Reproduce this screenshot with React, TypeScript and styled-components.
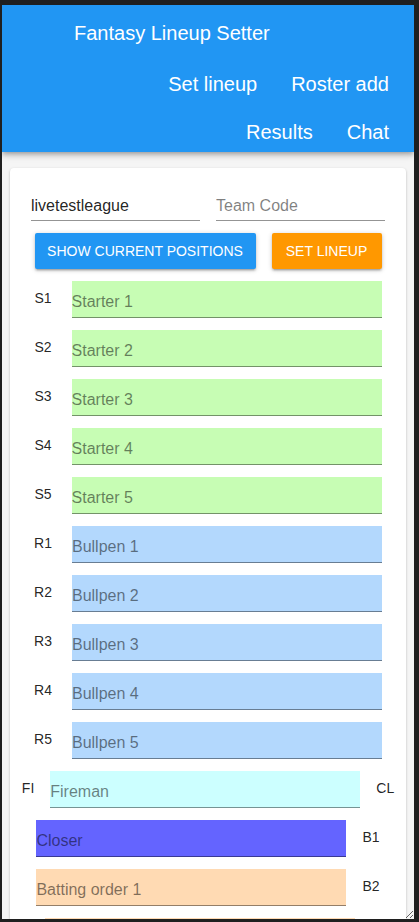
import React from "react";
import styled, { createGlobalStyle } from "styled-components";

const Global = createGlobalStyle`
  html, body { margin: 0; padding: 0; background: #1f1f1f; }
  body { font-family: "Liberation Sans", Arial, sans-serif; }
  * { box-sizing: border-box; }
`;

const Frame = styled.div`
  margin: 5px 5px 0 2px;
  height: 914px;
  background: #f5f5f5;
  overflow: hidden;
  resize: both;
  display: flex;
  flex-direction: column;
`;

const AppBar = styled.header`
  background: #2196f3;
  color: #fff;
  padding: 4px 25px 0 72px;
  height: 147px;
  flex-shrink: 0;
  box-shadow: 0 2px 4px -1px rgba(0,0,0,0.2), 0 4px 5px 0 rgba(0,0,0,0.14), 0 1px 10px 0 rgba(0,0,0,0.12);
  position: relative;
  z-index: 1;
`;

const Title = styled.div`
  height: 48px;
  line-height: 48px;
  font-size: 20px;
`;

const NavRow = styled.nav<{ $top: number }>`
  display: flex;
  justify-content: flex-end;
  gap: 34px;
  margin-top: ${(p) => p.$top}px;
  height: 40px;
  line-height: 40px;
  font-size: 20px;
`;

const NavItem = styled.span``;

const Card = styled.main`
  margin: 16px 8px 0 8px;
  background: #fff;
  border-radius: 4px;
  padding: 22px 21px 40px;
  box-shadow: 0 1px 3px 0 rgba(0,0,0,0.2), 0 1px 1px 0 rgba(0,0,0,0.14), 0 2px 1px -1px rgba(0,0,0,0.12);
  flex-shrink: 0;
`;

const FieldRow = styled.div`
  display: flex;
  gap: 16px;
`;

const TextField = styled.input`
  width: 169px;
  height: 31px;
  border: none;
  border-bottom: 1px solid rgba(0,0,0,0.42);
  padding: 1px 0 0;
  font-family: inherit;
  font-size: 16px;
  color: rgba(0,0,0,0.87);
  background: transparent;
  outline: none;
  &::placeholder { color: rgba(0,0,0,0.5); }
`;

const ButtonRow = styled.div`
  display: flex;
  justify-content: center;
  gap: 16px;
  margin-top: 12px;
`;

const Button = styled.button<{ $color: string; $width: number }>`
  width: ${(p) => p.$width}px;
  height: 36px;
  padding: 0;
  border: none;
  border-radius: 2px;
  background: ${(p) => p.$color};
  color: #fff;
  font-family: inherit;
  font-size: 14px;
  white-space: nowrap;
  flex-shrink: 0;
  text-transform: uppercase;
  box-shadow: 0 1px 5px 0 rgba(0,0,0,0.2), 0 2px 2px 0 rgba(0,0,0,0.14), 0 3px 1px -2px rgba(0,0,0,0.12);
`;

const Slots = styled.div`
  display: flex;
  flex-direction: column;
  gap: 12px;
  margin-top: 12px;
`;

const Line = styled.div<{ $gap: number }>`
  display: flex;
  justify-content: center;
  align-items: center;
  gap: ${(p) => p.$gap}px;
`;

const Label = styled.span`
  flex-shrink: 0;
  font-size: 14px;
  color: rgba(0,0,0,0.87);
  margin-top: -3px;
`;

const Slot = styled.input<{ $bg: string }>`
  flex-shrink: 0;
  width: 310px;
  height: 37px;
  border: none;
  border-bottom: 1px solid rgba(0,0,0,0.42);
  background: ${(p) => p.$bg};
  padding: 6px 0 0;
  font-family: inherit;
  font-size: 16px;
  color: rgba(0,0,0,0.87);
  outline: none;
  &::placeholder { color: rgba(0,0,0,0.5); }
`;

const GREEN = "#c7fdb4";
const BLUE = "#b3d8fd";
const CYAN = "#ccffff";
const CLOSER = "#6464ff";
const PEACH = "#ffdab3";

export default function App() {
  const starters = [1, 2, 3, 4, 5];
  const batting = [1, 2];
  return (
    <>
      <Global />
      <Frame>
        <AppBar>
          <Title>Fantasy Lineup Setter</Title>
          <NavRow $top={7}>
            <NavItem>Set lineup</NavItem>
            <NavItem>Roster add</NavItem>
          </NavRow>
          <NavRow $top={8}>
            <NavItem>Results</NavItem>
            <NavItem>Chat</NavItem>
          </NavRow>
        </AppBar>
        <Card>
          <FieldRow>
            <TextField defaultValue="livetestleague" />
            <TextField placeholder="Team Code" />
          </FieldRow>
          <ButtonRow>
            <Button $color="#2196f3" $width={221}>Show current positions</Button>
            <Button $color="#ff9800" $width={110}>Set lineup</Button>
          </ButtonRow>
          <Slots>
            {starters.map((n) => (
              <Line key={"s" + n} $gap={20}>
                <Label>S{n}</Label>
                <Slot $bg={GREEN} placeholder={`Starter ${n}`} />
              </Line>
            ))}
            {starters.map((n) => (
              <Line key={"r" + n} $gap={20}>
                <Label>R{n}</Label>
                <Slot $bg={BLUE} placeholder={`Bullpen ${n}`} />
              </Line>
            ))}
            <Line $gap={16}>
              <Label>FI</Label>
              <Slot $bg={CYAN} placeholder="Fireman" />
              <Label>CL</Label>
            </Line>
            <Line $gap={16}>
              <Slot $bg={CLOSER} placeholder="Closer" />
              <Label>B1</Label>
            </Line>
            {batting.map((n) => (
              <Line key={"b" + n} $gap={16}>
                <Slot $bg={PEACH} placeholder={n === 1 ? "Batting order 1" : ""} />
                <Label>{n === 1 ? "B2" : ""}</Label>
              </Line>
            ))}
          </Slots>
        </Card>
      </Frame>
    </>
  );
}
